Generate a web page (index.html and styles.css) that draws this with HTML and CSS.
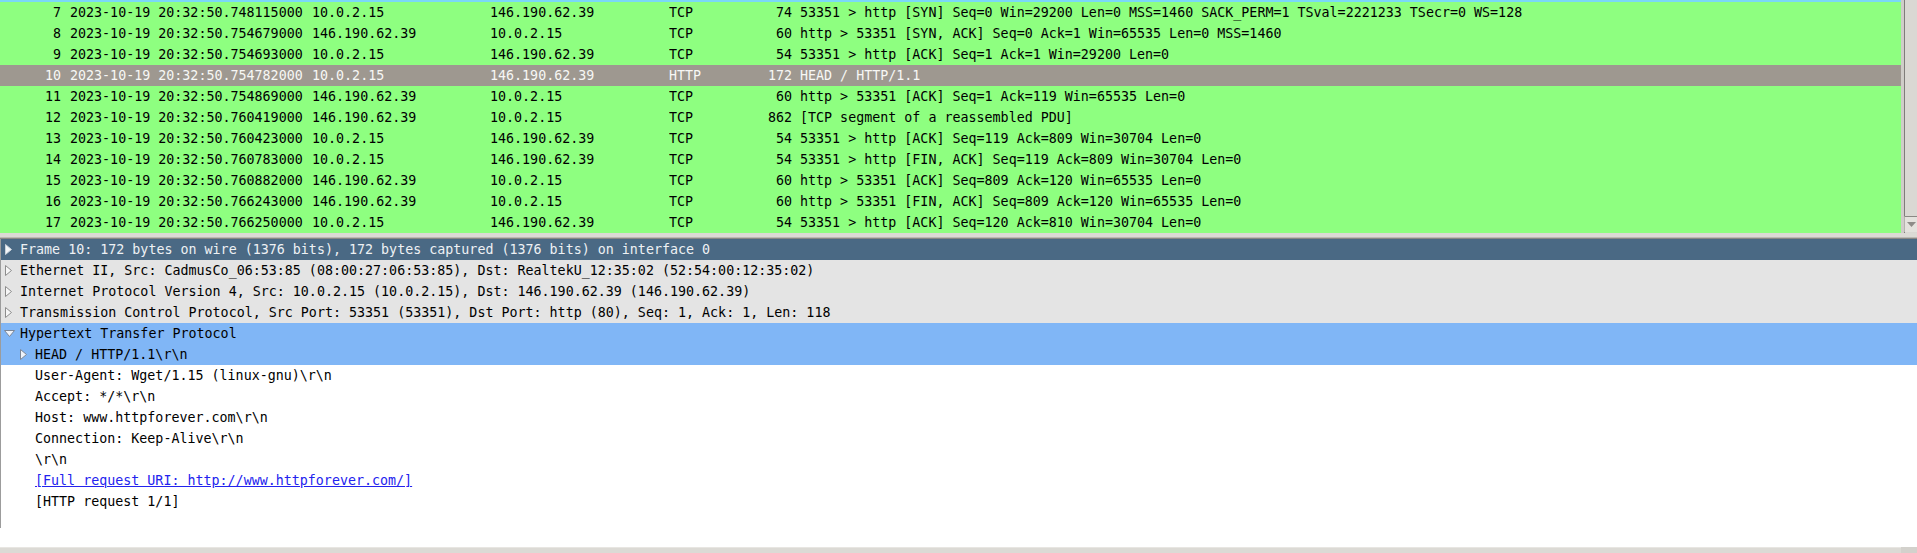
FILE: index.html
```html
<!DOCTYPE html>
<html>
<head>
<meta charset="utf-8">
<link rel="stylesheet" href="styles.css">
</head>
<body>
<div class="app">
  <div class="packet-pane">
    <div class="list">
      <div class="strip"></div>
      <div class="prow"><span class="no">7</span><span class="time">2023-10-19 20:32:50.748115000</span><span>10.0.2.15</span><span>146.190.62.39</span><span>TCP</span><span class="len">74</span><span class="info">53351 &gt; http [SYN] Seq=0 Win=29200 Len=0 MSS=1460 SACK_PERM=1 TSval=2221233 TSecr=0 WS=128</span></div>
      <div class="prow"><span class="no">8</span><span class="time">2023-10-19 20:32:50.754679000</span><span>146.190.62.39</span><span>10.0.2.15</span><span>TCP</span><span class="len">60</span><span class="info">http &gt; 53351 [SYN, ACK] Seq=0 Ack=1 Win=65535 Len=0 MSS=1460</span></div>
      <div class="prow"><span class="no">9</span><span class="time">2023-10-19 20:32:50.754693000</span><span>10.0.2.15</span><span>146.190.62.39</span><span>TCP</span><span class="len">54</span><span class="info">53351 &gt; http [ACK] Seq=1 Ack=1 Win=29200 Len=0</span></div>
      <div class="prow sel"><span class="no">10</span><span class="time">2023-10-19 20:32:50.754782000</span><span>10.0.2.15</span><span>146.190.62.39</span><span>HTTP</span><span class="len">172</span><span class="info">HEAD / HTTP/1.1</span></div>
      <div class="prow"><span class="no">11</span><span class="time">2023-10-19 20:32:50.754869000</span><span>146.190.62.39</span><span>10.0.2.15</span><span>TCP</span><span class="len">60</span><span class="info">http &gt; 53351 [ACK] Seq=1 Ack=119 Win=65535 Len=0</span></div>
      <div class="prow"><span class="no">12</span><span class="time">2023-10-19 20:32:50.760419000</span><span>146.190.62.39</span><span>10.0.2.15</span><span>TCP</span><span class="len">862</span><span class="info">[TCP segment of a reassembled PDU]</span></div>
      <div class="prow"><span class="no">13</span><span class="time">2023-10-19 20:32:50.760423000</span><span>10.0.2.15</span><span>146.190.62.39</span><span>TCP</span><span class="len">54</span><span class="info">53351 &gt; http [ACK] Seq=119 Ack=809 Win=30704 Len=0</span></div>
      <div class="prow"><span class="no">14</span><span class="time">2023-10-19 20:32:50.760783000</span><span>10.0.2.15</span><span>146.190.62.39</span><span>TCP</span><span class="len">54</span><span class="info">53351 &gt; http [FIN, ACK] Seq=119 Ack=809 Win=30704 Len=0</span></div>
      <div class="prow"><span class="no">15</span><span class="time">2023-10-19 20:32:50.760882000</span><span>146.190.62.39</span><span>10.0.2.15</span><span>TCP</span><span class="len">60</span><span class="info">http &gt; 53351 [ACK] Seq=809 Ack=120 Win=65535 Len=0</span></div>
      <div class="prow"><span class="no">16</span><span class="time">2023-10-19 20:32:50.766243000</span><span>146.190.62.39</span><span>10.0.2.15</span><span>TCP</span><span class="len">60</span><span class="info">http &gt; 53351 [FIN, ACK] Seq=809 Ack=120 Win=65535 Len=0</span></div>
      <div class="prow"><span class="no">17</span><span class="time">2023-10-19 20:32:50.766250000</span><span>10.0.2.15</span><span>146.190.62.39</span><span>TCP</span><span class="len">54</span><span class="info">53351 &gt; http [ACK] Seq=120 Ack=810 Win=30704 Len=0</span></div>
    </div>
    <div class="vscroll">
      <div class="sbtn"><svg width="9" height="6" viewBox="0 0 9 6"><polygon points="0,0 9,0 4.5,5" fill="#8e8c88"/></svg></div>
    </div>
  </div>
  <div class="sep"></div>
  <div class="detail">
    <div class="tree">
      <div class="trow lv0 frame"><span class="exp"><svg width="7" height="11" viewBox="0 0 7 11"><polygon points="0.5,0.5 6.5,5.5 0.5,10.5" fill="#f4f6f8" stroke="#c9d2da"/></svg></span><span class="txt">Frame 10: 172 bytes on wire (1376 bits), 172 bytes captured (1376 bits) on interface 0</span></div>
      <div class="trow lv0 grey"><span class="exp"><svg width="7" height="11" viewBox="0 0 7 11"><polygon points="0.5,0.5 6.5,5.5 0.5,10.5" fill="#f6f6f6" stroke="#8c8c8c"/></svg></span><span class="txt">Ethernet II, Src: CadmusCo_06:53:85 (08:00:27:06:53:85), Dst: RealtekU_12:35:02 (52:54:00:12:35:02)</span></div>
      <div class="trow lv0 grey"><span class="exp"><svg width="7" height="11" viewBox="0 0 7 11"><polygon points="0.5,0.5 6.5,5.5 0.5,10.5" fill="#f6f6f6" stroke="#8c8c8c"/></svg></span><span class="txt">Internet Protocol Version 4, Src: 10.0.2.15 (10.0.2.15), Dst: 146.190.62.39 (146.190.62.39)</span></div>
      <div class="trow lv0 grey"><span class="exp"><svg width="7" height="11" viewBox="0 0 7 11"><polygon points="0.5,0.5 6.5,5.5 0.5,10.5" fill="#f6f6f6" stroke="#8c8c8c"/></svg></span><span class="txt">Transmission Control Protocol, Src Port: 53351 (53351), Dst Port: http (80), Seq: 1, Ack: 1, Len: 118</span></div>
      <div class="trow lv0 blue"><span class="exp"><svg class="down" width="11" height="7" viewBox="0 0 11 7"><polygon points="0.5,0.5 10.5,0.5 5.5,6.5" fill="#eef3fb" stroke="#7d8796"/></svg></span><span class="txt">Hypertext Transfer Protocol</span></div>
      <div class="trow lv1 blue"><span class="exp"><svg width="7" height="11" viewBox="0 0 7 11"><polygon points="0.5,0.5 6.5,5.5 0.5,10.5" fill="#eef3fb" stroke="#7d8796"/></svg></span><span class="txt">HEAD / HTTP/1.1\r\n</span></div>
      <div class="trow lv1"><span class="exp"></span><span class="txt">User-Agent: Wget/1.15 (linux-gnu)\r\n</span></div>
      <div class="trow lv1"><span class="exp"></span><span class="txt">Accept: */*\r\n</span></div>
      <div class="trow lv1"><span class="exp"></span><span class="txt">Host: www.httpforever.com\r\n</span></div>
      <div class="trow lv1"><span class="exp"></span><span class="txt">Connection: Keep-Alive\r\n</span></div>
      <div class="trow lv1"><span class="exp"></span><span class="txt">\r\n</span></div>
      <div class="trow lv1"><span class="exp"></span><span class="txt link">[Full request URI: http://www.httpforever.com/]</span></div>
      <div class="trow lv1"><span class="exp"></span><span class="txt">[HTTP request 1/1]</span></div>
    </div>
    <div class="tree-rest"></div>
  </div>
  <div class="bottom"><div class="bfill"></div><div class="corner"></div></div>
</div>
</body>
</html>
```

FILE: styles.css
```css
html, body {
  margin: 0;
  padding: 0;
  background: #ffffff;
}

.app {
  width: 1917px;
  height: 553px;
  display: flex;
  flex-direction: column;
  font-family: "DejaVu Sans Mono", monospace;
  font-size: 13.33px;
  color: #000;
  overflow: hidden;
}

.packet-pane {
  height: 233px;
  display: flex;
  flex-shrink: 0;
}

.list {
  flex: 1;
  background: #8eff80;
  display: flex;
  flex-direction: column;
  overflow: hidden;
}

.strip {
  height: 2px;
  background: #7ad8f8;
}

.prow {
  height: 21px;
  line-height: 21px;
  display: grid;
  grid-template-columns: 61px 251px 178px 179px 91px 32px 1fr;
  white-space: pre;
}

.prow > span {
  overflow: hidden;
}

.prow .no { text-align: right; }
.prow .time { padding-left: 9px; }
.prow .len { text-align: right; }
.prow .info { padding-left: 8px; }

.prow.sel {
  background: #9e9890;
  color: #f7f7f5;
}

.vscroll {
  width: 16px;
  background: #dad8d3;
  box-shadow: inset 3px 0 0 #cfcdc8, inset 4px 0 0 #7f7d79;
  display: flex;
  flex-direction: column;
  justify-content: flex-end;
  align-items: flex-end;
}

.sbtn {
  width: 12px;
  height: 15px;
  margin-bottom: 1px;
  border-top: 1px solid #8a8884;
  border-left: 1px solid #b5b3ae;
  background: #e4e2dd;
  display: flex;
  align-items: center;
  justify-content: center;
}

.sep {
  height: 6px;
  flex-shrink: 0;
  background: #dcdad5;
  box-shadow: inset 0 -1px 0 #8a8884, inset 0 -2px 0 #bbb9b4;
}

.detail {
  height: 308px;
  flex-shrink: 0;
  background: #ffffff;
  display: flex;
  flex-direction: column;
}

.tree {
  height: 289px;
  border-left: 1px solid #9c9c9c;
}

.tree-rest {
  flex: 1;
}

.trow {
  height: 21px;
  line-height: 21px;
  display: flex;
  align-items: center;
  white-space: pre;
}

.trow.lv0 { padding-left: 4px; }
.trow.lv1 { padding-left: 19px; }

.exp {
  width: 15px;
  height: 21px;
  display: flex;
  align-items: center;
  flex-shrink: 0;
}

.exp svg.down {
  margin-left: -1px;
}

.trow.frame {
  background: #4a6984;
  color: #eef1f4;
}

.trow.grey {
  background: #e4e4e4;
}

.trow.blue {
  background: #80b6f6;
}

.txt.link {
  color: #2323ee;
  text-decoration: underline;
}

.bottom {
  height: 6px;
  flex-shrink: 0;
  display: flex;
  background: #dcdad5;
  box-shadow: inset 0 1px 0 #e8e6e2;
}

.bfill { flex: 1; }

.corner {
  width: 16px;
  background: #d3d1cc;
}
```
